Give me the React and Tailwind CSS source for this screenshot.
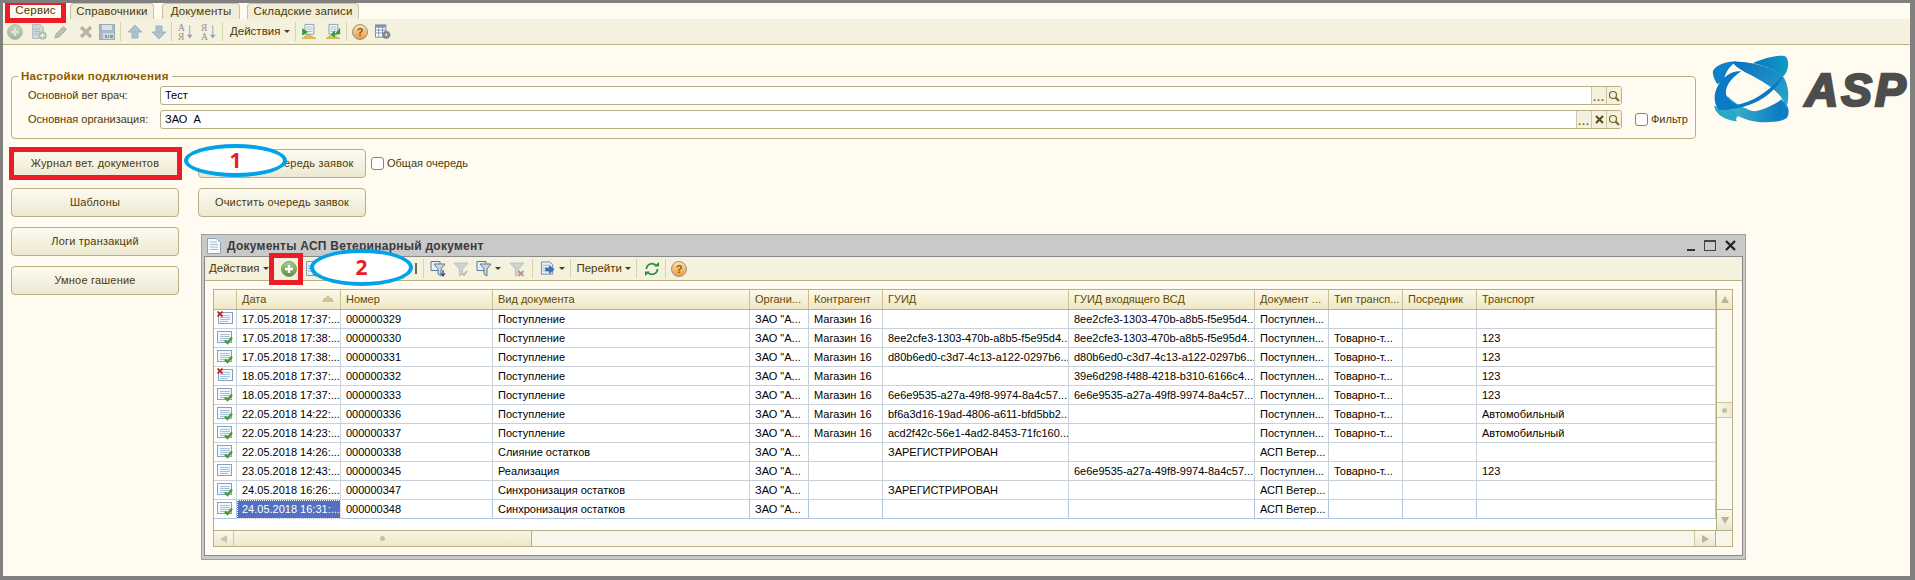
import React from "react";

const Defs = () => (
  <svg width="0" height="0" className="absolute">
    <defs>
      <linearGradient id="gp" x1="0" y1="0" x2="0" y2="1"><stop offset="0" stopColor="#a8cf8c" /><stop offset="1" stopColor="#5b8f44" /></linearGradient>
      <linearGradient id="gd" x1="0" y1="0" x2="0" y2="1"><stop offset="0" stopColor="#c5d1bd" /><stop offset="1" stopColor="#a3b49c" /></linearGradient>
      <linearGradient id="gh" x1="0" y1="0" x2="0" y2="1"><stop offset="0" stopColor="#fbe3ae" /><stop offset="1" stopColor="#eb9a3d" /></linearGradient>
      <linearGradient id="la" x1="0" y1="0" x2="1" y2="1"><stop offset="0" stopColor="#0a6fc0" /><stop offset="1" stopColor="#2aa9c9" /></linearGradient>
      <linearGradient id="lb" x1="0" y1="0" x2="1" y2="0"><stop offset="0" stopColor="#0875c4" /><stop offset="1" stopColor="#0f9cc4" /></linearGradient>
      <linearGradient id="lc" x1="0" y1="0" x2="1" y2="0"><stop offset="0" stopColor="#3fb8c8" /><stop offset="1" stopColor="#0a78c4" /></linearGradient>
    </defs>
  </svg>
);

const Plus = ({ off }) => (
  <svg width="16" height="16" viewBox="0 0 16 16">
    <circle cx="8" cy="8" r="7.5" fill={off ? "url(#gd)" : "url(#gp)"} stroke={off ? "#b4bfae" : "#7c9f68"} />
    <path d="M8 4v8M4 8h8" stroke={off ? "#dfe5da" : "#fff"} strokeWidth="2.4" />
  </svg>
);
const DocPlus = ({ off }) => (
  <svg width="16" height="16" viewBox="0 0 16 16">
    <path d="M1.5.5h8l3 3v11h-11z" fill={off ? "#cfd6d6" : "#e9f0f7"} stroke={off ? "#b5bfc2" : "#7f9bb8"} />
    <path d="M3 5h6M3 7.500h6M3 10h4" stroke={off ? "#aeb9bd" : "#8aa3bd"} />
    <circle cx="11.500" cy="11.500" r="4" fill={off ? "#abbba5" : "#6da653"} />
    <path d="M11.500 9v5M9 11.500h5" stroke="#eef" strokeWidth="1.400" />
  </svg>
);
const Pencil = () => (
  <svg width="16" height="16" viewBox="0 0 16 16"><path d="M2 14l1-4 7.500-7.500 3 3L6 13z" fill="#b7c3ae" stroke="#a6b39d" /></svg>
);
const Cross = () => (
  <svg width="16" height="16" viewBox="0 0 16 16"><path d="M3 3l10 10M13 3L3 13" stroke="#bcb3a8" strokeWidth="3.400" /></svg>
);
const Save = () => (
  <svg width="16" height="16" viewBox="0 0 16 16">
    <rect x=".5" y=".5" width="15" height="15" fill="#a9b8c6" stroke="#9aa9b6" />
    <rect x="3" y="1" width="10" height="5" fill="#d9e0e6" />
    <rect x="4" y="9" width="11" height="6" fill="#cdd5dc" />
    <path d="M6 11h2v3H6zM9 11h1v3H9zM11 11h3v3h-3z" fill="#8b98a4" />
  </svg>
);
const Arrow = ({ down }) => (
  <svg width="16" height="16" viewBox="0 0 16 16">
    <path d={down ? "M5 2h6v6h4l-7 7-7-7h4z" : "M5 14h6V8h4L8 1 1 8h4z"} fill="#aebfcd" stroke="#a0b2c1" />
  </svg>
);
const Sort = ({ rev }) => (
  <svg width="17" height="18" viewBox="0 0 17 18">
    <text x="0" y="8" fontSize="10" fontFamily="Liberation Serif, serif" fill={rev ? "#a08d86" : "#7d8d99"}>{rev ? "Я" : "А"}</text>
    <text x="0" y="17" fontSize="10" fontFamily="Liberation Serif, serif" fill={rev ? "#7d8d99" : "#a08d86"}>{rev ? "А" : "Я"}</text>
    <path d="M12.500 2v12" stroke="#8ea2b5" />
    <path d="M9.500 12h6l-3 4z" fill="#8ea2b5" />
  </svg>
);
const Move = ({ flip }) => (
  <svg width="18" height="17" viewBox="0 0 18 17">
    <path d="M4.500 .5h10v11h-10z" fill="#f4f8fc" stroke="#7f97b0" />
    <path d="M6 3.500h7M6 6h7M6 8.500h7" stroke="#9fb3c8" />
    <path d="M1 16.500l7-5 9 5z" fill="#e5bc3e" stroke="#b79421" strokeWidth=".5" />
    <path d={flip ? "M16.500 5v6h-6V8.500l-3 3 3 3V12" : "M2 6l5 3-5 3z"} fill="#2f9a3a" stroke="#2f9a3a" strokeWidth="1.200" />
  </svg>
);
const Help = () => (
  <svg width="16" height="16" viewBox="0 0 16 16">
    <circle cx="8" cy="8" r="7.500" fill="url(#gh)" stroke="#9a9184" />
    <text x="8" y="12" textAnchor="middle" fontSize="11" fontWeight="700" fontFamily="Liberation Sans, sans-serif" fill="#8c5a16">?</text>
  </svg>
);
const Gear = () => (
  <svg width="17" height="16" viewBox="0 0 17 16">
    <rect x=".5" y=".5" width="11" height="13" fill="#fff" stroke="#6c8aa8" />
    <path d="M.5 3h11M.5 6h11M.5 9h11M4 1v13M8 1v13" stroke="#7d97b3" />
    <path d="M1 .5h10v2H1z" fill="#6f8fae" />
    <circle cx="12" cy="11" r="3.600" fill="#8d8d8d" stroke="#7a7a7a" strokeDasharray="1.500 .8" strokeWidth="1.600" />
    <circle cx="12" cy="11" r="1.200" fill="#eee" />
  </svg>
);
const Funnel = ({ tone = "dark", mark }) => {
  const dark = tone === "dark";
  return (
    <svg width="16" height="16" viewBox="0 0 16 16">
      {dark && <path d="M1 .5h9v9H1z" fill="#e8eff6" stroke="#5d7a96" />}
      <path d={dark ? "M4 3h11l-4 5v7l-3-2V8z" : "M1 2h14L9.500 8v5L6.500 15V8z"} fill={dark ? "#c9d6e0" : "#ccd2d2"} stroke={dark ? "#5d7a96" : "#b9c2c2"} />
      {mark === "x" && <path d="M9.500 10l5 5M14.500 10l-5 5" stroke="#c0938a" strokeWidth="1.800" />}
      {mark === "check" && <path d="M9 12l2 2 3-4" fill="none" stroke="#a9b9a9" strokeWidth="1.500" />}
      {mark === "arrow" && <path d="M13 9v5M11 12l2 3 2-3" fill="none" stroke="#2f4f73" strokeWidth="1.200" />}
    </svg>
  );
};
const DocArrow = () => (
  <svg width="17" height="16" viewBox="0 0 17 16">
    <path d="M1.500 .5h9l3 3v10h-12z" fill="#e6eef6" stroke="#6f8ba8" />
    <path d="M3 4h6M3 7h7M3 10h7" stroke="#9db2c7" />
    <path d="M6 7h4V4l5 4.500L10 13v-3H6z" fill="#3c77b8" stroke="#2d5c94" strokeWidth=".6" />
  </svg>
);
const Refresh = () => (
  <svg width="16" height="16" viewBox="0 0 16 16" fill="none">
    <path d="M2.500 8a5.500 5.500 0 0 1 9.500-3.600" stroke="#2f8f3a" strokeWidth="1.800" />
    <path d="M13.500 8A5.500 5.500 0 0 1 4 11.600" stroke="#2f8f3a" strokeWidth="1.800" />
    <path d="M10 5.500h5V1zM6 10.500H1V15z" fill="#2f8f3a" />
  </svg>
);
const Caret = ({ className = "" }) => <span className={`block h-0 w-0 border-x-[3px] border-t-[3px] border-x-transparent border-t-[#4d3d10] ${className}`} />;
const Sep = ({ className = "" }) => <span className={`h-[19px] w-px bg-[#d8d2ae] ${className}`} />;
const DocState = ({ s }) => (
  <svg width="16" height="15" viewBox="0 0 16 15">
    <rect x={s === "x" ? 1.500 : .5} y="1.500" width="14" height="11" fill="#f3f8fd" stroke="#84a3c2" />
    <path d="M3 4.500h10M3 6.500h10M3 8.500h10M3 10.500h8" stroke="#a9c0d6" />
    {s === "ok" && <path d="M8 10.500l2.500 2.500L15 7.500" fill="none" stroke="#3f9e2f" strokeWidth="2.200" />}
    {s === "x" && <path d="M.5 .5l5 5M5.500 .5l-5 5" stroke="#cc2a20" strokeWidth="1.800" />}
  </svg>
);

const brown = "text-[#4d3a05]";
const Btn = ({ children }) => (
  <button className={`h-[29px] w-[168px] shrink-0 rounded-[4px] border border-[#b8af85] bg-gradient-to-b from-[#fdfbf1] to-[#ece8d2] text-[11px] tracking-[.2px] ${brown}`}>{children}</button>
);
const Check = ({ className = "" }) => <span className={`block h-[13px] w-[13px] shrink-0 rounded-[3px] border border-[#8c8468] bg-white ${className}`} />;
const FieldBtn = ({ children }) => (
  <span className="flex w-[15px] items-center justify-center border-l border-[#cfc8a4] bg-[#f4f1de]">{children}</span>
);
const Dots = () => <span className="mt-[4px] text-[11px] font-bold leading-none tracking-[1px] text-[#7d6420]">...</span>;
const Lens = () => (
  <svg width="12" height="12" viewBox="0 0 12 12" fill="none"><circle cx="5" cy="5" r="3.500" stroke="#7d6420" strokeWidth="1.200" /><path d="M7.500 7.500l3.500 3.500" stroke="#7d6420" strokeWidth="2" /></svg>
);
const XS = () => (
  <svg width="9" height="9" viewBox="0 0 9 9"><path d="M1 1l7 7M8 1L1 8" stroke="#5e4a12" strokeWidth="2" /></svg>
);
const Field = ({ value, clear }) => (
  <div className="flex h-[19px] overflow-hidden rounded-[3px] border border-[#b8af85] bg-white">
    <span className="flex-1 whitespace-pre pl-[4px] text-[11px] leading-[17px] text-black">{value}</span>
    <FieldBtn><Dots /></FieldBtn>
    {clear && <FieldBtn><XS /></FieldBtn>}
    <FieldBtn><Lens /></FieldBtn>
  </div>
);

const Logo = () => (
  <svg width="78" height="69" viewBox="485 103 232 207">
    <path d="M487 150C500 130 530 122 560 122C535 135 522 160 520 180L500 190C490 175 485 160 487 150Z" fill="#0f80c8" />
    <path d="M606 128C640 112 690 100 706 108C716 120 716 148 697 168C680 150 640 135 606 128Z" fill="url(#lb)" />
    <path d="M610 288C640 280 680 260 695 240C716 250 718 280 708 292C690 305 650 310 610 288Z" fill="#0f7fc6" />
    <path d="M490 255C520 265 560 270 590 262C560 285 550 295 560 302C530 300 495 285 490 255Z" fill="#2aa8c8" />
    <path d="M530 225C555 250 585 268 612 272C650 265 680 245 695 235C700 270 690 295 670 300C640 312 590 300 560 285C545 265 535 245 530 225Z" fill="url(#lc)" />
    <path d="M545 124C600 120 680 145 697 168C714 190 718 235 706 262C700 225 660 195 610 168C585 155 560 145 545 124Z" fill="url(#la)" />
    <path d="M697 165C670 225 600 268 505 268C485 245 486 205 520 172C535 158 552 150 572 152C540 172 518 205 528 226C535 238 548 248 560 252C610 245 660 205 697 165Z" fill="#0a79c6" />
  </svg>
);

const Ic = ({ className = "", children }) => <span className={`flex h-4 w-4 shrink-0 items-center justify-center ${className}`}>{children}</span>;

const cols = "grid-cols-[23px_104px_152px_257px_59px_74px_186px_186px_74px_74px_74px_239px]";
const heads = ["", "Дата", "Номер", "Вид документа", "Органи...", "Контрагент", "ГУИД", "ГУИД входящего ВСД", "Документ ...", "Тип трансп...", "Посредник", "Транспорт"];
const Z = 'ЗАО "А...';
const M = "Магазин 16";
const P = "Поступлен...";
const A = "АСП Ветер...";
const T = "Товарно-т...";
const G1 = "8ee2cfe3-1303-470b-a8b5-f5e95d4...";
const G2 = "d80b6ed0-c3d7-4c13-a122-0297b6...";
const G3 = "6e6e9535-a27a-49f8-9974-8a4c57...";
const R = "ЗАРЕГИСТРИРОВАН";
const rows = [
  ["x", "17.05.2018 17:37:...", "000000329", "Поступление", Z, M, "", G1, P, "", "", ""],
  ["ok", "17.05.2018 17:38:...", "000000330", "Поступление", Z, M, G1, G1, P, T, "", "123"],
  ["ok", "17.05.2018 17:38:...", "000000331", "Поступление", Z, M, G2, G2, P, T, "", "123"],
  ["x", "18.05.2018 17:37:...", "000000332", "Поступление", Z, M, "", "39e6d298-f488-4218-b310-6166c4...", P, T, "", "123"],
  ["ok", "18.05.2018 17:37:...", "000000333", "Поступление", Z, M, G3, G3, P, T, "", "123"],
  ["ok", "22.05.2018 14:22:...", "000000336", "Поступление", Z, M, "bf6a3d16-19ad-4806-a611-bfd5bb2...", "", P, T, "", "Автомобильный"],
  ["ok", "22.05.2018 14:23:...", "000000337", "Поступление", Z, M, "acd2f42c-56e1-4ad2-8453-71fc160...", "", P, T, "", "Автомобильный"],
  ["ok", "22.05.2018 14:26:...", "000000338", "Слияние остатков", Z, "", R, "", A, "", "", ""],
  ["doc", "23.05.2018 12:43:...", "000000345", "Реализация", Z, "", "", G3, P, T, "", "123"],
  ["ok", "24.05.2018 16:26:...", "000000347", "Синхронизация остатков", Z, "", R, "", A, "", "", ""],
  ["ok", "24.05.2018 16:31:...", "000000348", "Синхронизация остатков", Z, "", "", "", A, "", "", ""],
];

const Tri = ({ dir }) => {
  const c = {
    up: "border-x-[4px] border-x-transparent border-b-[7px] border-b-[#b9b39c]",
    down: "border-x-[4px] border-x-transparent border-t-[7px] border-t-[#b9b39c]",
    left: "border-y-[4px] border-y-transparent border-r-[7px] border-r-[#c9c4ad]",
    right: "border-y-[4px] border-y-transparent border-l-[7px] border-l-[#b9b39c]",
  }[dir];
  return <span className={`h-0 w-0 ${c}`} />;
};
const Grip = () => <span className="h-[5px] w-[5px] rounded-full bg-[#c4bfa8]" />;

const Table = () => (
  <div className="flex h-[258px] w-[1520px] flex-col border border-[#b8af85] bg-white text-[11px]">
    <div className="flex min-h-0 flex-1">
      <div className="w-[1502px] shrink-0">
        <div className={`grid h-[20px] ${cols} border-b border-[#b8af85] bg-gradient-to-b from-[#fdf9e8] to-[#efe7c6] text-[#5f4a05]`}>
          {heads.map((h, i) => (
            <div key={i} className="relative flex items-center overflow-hidden whitespace-nowrap border-r border-[#c9bf92] pl-[5px] leading-none">
              {h}
              {i === 1 && (
                <svg className="absolute right-[6px] top-[5px]" width="12" height="7" viewBox="0 0 12 7"><path d="M6 0l2.500 3H10l2 4H0l2-4h1.500z" fill="#cfc493" /></svg>
              )}
            </div>
          ))}
        </div>
        {rows.map((r, ri) => {
          const last = ri === rows.length - 1;
          const line = last ? "border-[#aec4e2]" : "border-[#c8d0da]";
          return (
            <div key={ri} className={`grid h-[19px] ${cols} text-black`}>
              {r.map((c, ci) => {
                if (ci === 0)
                  return (
                    <div key={ci} className={`flex items-start justify-center border-b border-r pt-px ${line}`}>
                      <DocState s={c} />
                    </div>
                  );
                const sel = last && ci === 1;
                return (
                  <div key={ci} className={`flex items-center overflow-hidden whitespace-nowrap border-b border-r leading-none ${line} ${sel ? "bg-[#5470c0] pl-[5px] text-white outline-1 -outline-offset-1 outline-dotted outline-white" : "pl-[5px]"}`}>
                    {c}
                  </div>
                );
              })}
            </div>
          );
        })}
      </div>
      <div className="flex w-[16px] shrink-0 flex-col border-l border-[#b8af85] bg-[#fcfaf0]">
        <div className="flex h-[20px] items-center justify-center border-b border-[#b8af85] bg-gradient-to-b from-[#fdf9e8] to-[#efe7c6]"><Tri dir="up" /></div>
        <div className="h-[92px]" />
        <div className="flex h-[16px] items-center justify-center border-y border-[#cfc8a4] bg-gradient-to-r from-[#fbf8e8] to-[#efe9cf]"><Grip /></div>
        <div className="flex-1" />
        <div className="flex h-[21px] items-center justify-center border-t border-[#b8af85] bg-gradient-to-b from-[#fbf9ec] to-[#ece7d0]"><Tri dir="down" /></div>
      </div>
    </div>
    <div className="flex h-[16px] shrink-0 border-t border-[#b8af85] bg-[#f8f6ec]">
      <div className="flex w-[20px] items-center justify-center border-r border-[#cfc8a4] bg-gradient-to-b from-[#fbf9ec] to-[#ece7d0]"><Tri dir="left" /></div>
      <div className="flex w-[298px] items-center justify-center border-r border-[#b8af85] bg-gradient-to-b from-[#f9f5e2] to-[#eee7c8]"><Grip /></div>
      <div className="flex-1" />
      <div className="flex w-[21px] items-center justify-center border-l border-[#cfc8a4] bg-gradient-to-b from-[#fbf9ec] to-[#ece7d0]"><Tri dir="right" /></div>
      <div className="w-[17px] border-l border-[#b8af85]" />
    </div>
  </div>
);

const Win = () => (
  <div className="ml-[3px] mt-[17px] flex h-[326px] w-[1545px] flex-col border border-[#a0a0a0] bg-[#c9c9c9] px-[2px] pb-[3px]">
    <div className="flex h-[21px] shrink-0 items-center">
      <svg className="ml-[3px]" width="14" height="16" viewBox="0 0 14 16">
        <path d="M.5 .5h9l4 4v11H.5z" fill="#f5f9fd" stroke="#8ba3bb" />
        <path d="M3 4h7M3 6.500h8M3 9h8M3 11.500h8" stroke="#a9bdd0" />
      </svg>
      <span className="ml-[6px] text-[12px] font-bold tracking-[.25px] text-[#3a3a3a]">Документы АСП Ветеринарный документ</span>
      <div className="ml-auto mr-[7px] flex items-center gap-[9px]">
        <span className="mt-[8px] h-[2px] w-[8px] bg-[#333]" />
        <span className="h-[11px] w-[12px] border border-t-2 border-[#444]" />
        <svg width="11" height="11" viewBox="0 0 11 11"><path d="M1 1l9 9M10 1l-9 9" stroke="#222" strokeWidth="2.200" /></svg>
      </div>
    </div>
    <div className="flex min-h-0 flex-1 flex-col border border-[#8a8a8a] bg-[#fffbf0]">
      <div className="flex h-[24px] shrink-0 items-center border-b border-[#b8af85] bg-[#f4f1de] pl-[4px]">
        <span className={`text-[11.500px] ${brown}`}>Действия</span>
        <Caret className="ml-[4px]" />
        <Ic className="ml-[12px]"><Plus /></Ic>
        <Ic className="ml-[8px]"><DocPlus /></Ic>
        <span className="ml-[94px] h-[11px] w-[2px] bg-[#6d6a5c]" />
        <Sep className="ml-[6px]" />
        <Ic className="ml-[6px]"><Funnel mark="arrow" /></Ic>
        <Ic className="ml-[7px]"><Funnel tone="light" mark="check" /></Ic>
        <Ic className="ml-[7px]"><Funnel /></Ic>
        <Caret className="ml-[3px]" />
        <Ic className="ml-[8px]"><Funnel tone="light" mark="x" /></Ic>
        <Sep className="ml-[7px]" />
        <Ic className="ml-[7px]"><DocArrow /></Ic>
        <Caret className="ml-[3px]" />
        <Sep className="ml-[5px]" />
        <span className={`ml-[5px] text-[11.500px] ${brown}`}>Перейти</span>
        <Caret className="ml-[3px]" />
        <Sep className="ml-[5px]" />
        <Ic className="ml-[7px]"><Refresh /></Ic>
        <Sep className="ml-[5px]" />
        <Ic className="ml-[5px]"><Help /></Ic>
      </div>
      <div className="pl-[8px] pt-[8px]"><Table /></div>
    </div>
  </div>
);

export default function App() {
  return (
    <div className="relative h-[580px] w-[1915px] overflow-hidden border-b-[4px] border-l-[3px] border-r-[5px] border-t-[3px] border-[#808080] bg-[#fffbf0] font-['Liberation_Sans',sans-serif]">
      <Defs />
      <div className="flex h-[16px] items-end pl-[2px] text-[11.500px] tracking-[.15px]">
        <span className="flex h-[16px] w-[61px] items-center justify-center text-[#4d3a05]">Сервис</span>
        <span className={`ml-[4px] flex h-[16px] w-[84px] items-center justify-center rounded-t-[4px] border border-b-0 border-[#c9c3a0] bg-[#f1edd8] ${brown}`}>Справочники</span>
        <span className={`ml-[8px] flex h-[16px] w-[78px] items-center justify-center rounded-t-[4px] border border-b-0 border-[#c9c3a0] bg-[#f1edd8] ${brown}`}>Документы</span>
        <span className={`ml-[7px] flex h-[16px] w-[112px] items-center justify-center rounded-t-[4px] border border-b-0 border-[#c9c3a0] bg-[#f1edd8] ${brown}`}>Складские записи</span>
      </div>
      <div className="flex h-[26px] items-center border-b border-[#b8af85] bg-[#f4f1de] pl-[4px]">
        <Ic><Plus off /></Ic>
        <Ic className="ml-[8px]"><DocPlus off /></Ic>
        <Ic className="ml-[6px]"><Pencil /></Ic>
        <Ic className="ml-[9px]"><Cross /></Ic>
        <Ic className="ml-[5px]"><Save /></Ic>
        <Sep className="ml-[5px]" />
        <Ic className="ml-[6px]"><Arrow /></Ic>
        <Ic className="ml-[8px]"><Arrow down /></Ic>
        <Sep className="ml-[4px]" />
        <Ic className="ml-[6px]"><Sort /></Ic>
        <Ic className="ml-[7px]"><Sort rev /></Ic>
        <Sep className="ml-[5px]" />
        <span className={`ml-[7px] text-[11.500px] ${brown}`}>Действия</span>
        <Caret className="ml-[4px]" />
        <Sep className="ml-[5px]" />
        <Ic className="ml-[5px]"><Move /></Ic>
        <Ic className="ml-[8px]"><Move flip /></Ic>
        <Sep className="ml-[5px]" />
        <Ic className="ml-[5px]"><Help /></Ic>
        <Ic className="ml-[7px]"><Gear /></Ic>
      </div>
      <div className="flex h-[94px] items-start pl-[8px]">
        <div className="relative mt-[31px] h-[63px] w-[1685px] rounded-[4px] border border-[#b8af85] pt-[9px]">
          <span className="absolute -top-[8px] left-[6px] bg-[#fffbf0] px-[3px] text-[11.500px] font-bold leading-[14px] tracking-[.3px] text-[#8a5f00]">Настройки подключения</span>
          <div className="grid grid-cols-[16px_132px_1462px_74px] gap-y-[5px] text-[11px]">
            <span />
            <span className={`leading-[19px] ${brown}`}>Основной вет врач:</span>
            <Field value="Тест" />
            <span />
            <span />
            <span className={`leading-[19px] ${brown}`}>Основная организация:</span>
            <Field value="ЗАО  А" clear />
            <span className="flex items-center pl-[13px]">
              <Check />
              <span className={`ml-[3px] ${brown}`}>Фильтр</span>
            </span>
          </div>
        </div>
        <div className="ml-[16px] mt-[10px] flex items-center">
          <Logo />
          <span className="ml-[15px] text-[46px] font-bold italic leading-[68px] tracking-[3px] text-[#4d4d4d] [-webkit-text-stroke:2.500px_#4d4d4d]">ASP</span>
        </div>
      </div>
      <div className="mt-[10px] flex items-start gap-[19px] pl-[8px]">
        <div className="flex flex-col gap-[10px]">
          <Btn>Журнал вет. документов</Btn>
          <Btn>Шаблоны</Btn>
          <Btn>Логи транзакций</Btn>
          <Btn>Умное гашение</Btn>
        </div>
        <div className="flex flex-col">
          <div className="flex items-center">
            <Btn>Выполнить очередь заявок</Btn>
            <Check className="ml-[5px]" />
            <span className={`ml-[3px] text-[11px] ${brown}`}>Общая очередь</span>
          </div>
          <div className="mt-[10px]"><Btn>Очистить очередь заявок</Btn></div>
          <Win />
        </div>
      </div>
      {/* annotations laid over the screenshot */}
      <span className="absolute left-[2px] top-[-3px] h-[23px] w-[61px] border-[5px] border-[#ed1c24]" />
      <span className="absolute left-[6px] top-[144px] h-[33px] w-[173px] border-[5px] border-[#ed1c24]" />
      <span className="absolute left-[266px] top-[250px] h-[32px] w-[34px] border-[5px] border-[#ed1c24]" />
      <span className="absolute left-[181px] top-[141px] flex h-[33px] w-[103px] items-center justify-center rounded-[50%] border-[4px] border-[#00a2e8] bg-white font-['Open_Sans',sans-serif] text-[21px] font-bold leading-none text-[#ed1c24]">1</span>
      <span className="absolute left-[307px] top-[246px] flex h-[37px] w-[103px] items-center justify-center rounded-[50%] border-[4px] border-[#00a2e8] bg-white font-['Open_Sans',sans-serif] text-[21px] font-bold leading-none text-[#ed1c24]">2</span>
    </div>
  );
}
